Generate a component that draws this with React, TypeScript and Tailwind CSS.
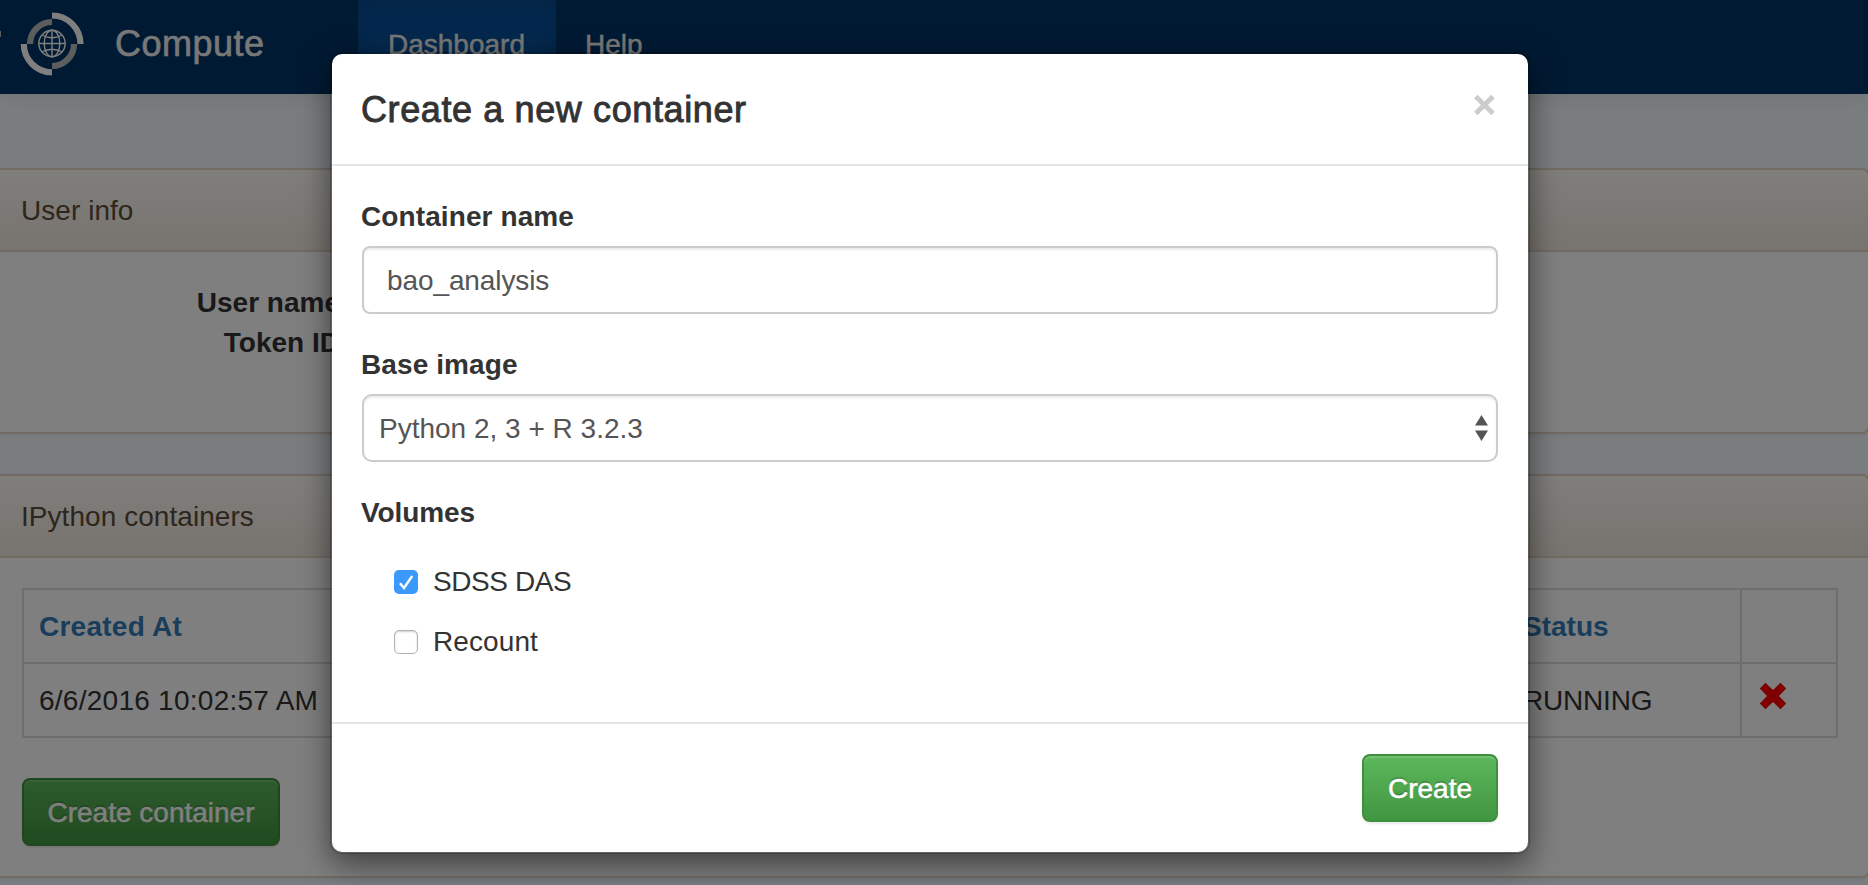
import React from "react";

const font = "font-['Helvetica_Neue','Liberation_Sans',Arial,sans-serif]";

function Logo() {
  return (
    <svg className="block h-[66px] w-[66px]" viewBox="0 0 66 66" fill="none">
      <path d="M32 3.5A28.5 28.5 0 0 1 60.5 32" stroke="#fff" strokeWidth="6.2" />
      <path d="M3.8 32A28.4 28.4 0 0 0 32 60.4" stroke="#fff" strokeWidth="6.2" />
      <path d="M10 32A22 22 0 0 1 32 10" stroke="#bababa" strokeWidth="6.2" />
      <path d="M54 32A22 22 0 0 1 32 54" stroke="#bababa" strokeWidth="6.2" />
      <g stroke="#fff" strokeWidth="1.4">
        <circle cx="32" cy="31.5" r="13.2" />
        <ellipse cx="32" cy="31.5" rx="7.8" ry="13.2" />
        <path d="M32 18v27M18.8 31.5h26.4M22 23Q32 28.5 42 23M22 40Q32 34.5 42 40" />
      </g>
    </svg>
  );
}

function Panel({ title, className, children }: { title: string; className: string; children: React.ReactNode }) {
  return (
    <section className={`-mr-[2px] -ml-[10px] rounded-lg border-2 border-[#e2d6c6] bg-white shadow-[0_2px_4px_rgba(0,0,0,0.05)] ${className}`}>
      <h2 className="flex h-[82px] items-center rounded-t-md border-b-2 border-[#e2d6c6] bg-gradient-to-b from-[#fffdf7] to-[#f0e8e0] pt-px pl-[29px] text-[28px] tracking-[0.05px] text-[#5c4c36]">
        {title}
      </h2>
      {children}
    </section>
  );
}

function Button({ children, className }: { children: React.ReactNode; className: string }) {
  return (
    <button
      className={`block h-[68px] rounded-lg border-2 border-[#3e8f3e] bg-gradient-to-b from-[#5cb85c] to-[#419641] pt-px text-[28px] leading-[40px] text-white shadow-[inset_0_2px_0_rgba(255,255,255,0.15),0_2px_2px_rgba(0,0,0,0.075)] [-webkit-text-stroke:0.5px] [text-shadow:0_-2px_0_rgba(0,0,0,0.2)] ${className}`}
    >
      {children}
    </button>
  );
}

function Page() {
  return (
    <div className="h-full overflow-hidden bg-[#f4fbff]">
      <header className="relative flex h-[94px] bg-[#003466] text-[#f0f0f0] shadow-[0_2px_20px_rgba(0,0,0,0.1)]">
        <span className="mt-[31px] h-[6px] w-px bg-[#bababa]" />
        <div className="flex w-[357px] pt-3 pl-[19px]">
          <Logo />
          <span className="ml-[29px] pt-[6px] text-[36px] leading-[52px] tracking-[0.5px] [-webkit-text-stroke:0.6px]">Compute</span>
        </div>
        <div className="w-[198px] bg-[#08509a] pt-[25px] pl-[30px] text-[28px] leading-[40px] shadow-[inset_0_6px_18px_rgba(0,0,0,0.1)] [-webkit-text-stroke:0.4px]">Dashboard</div>
        <div className="pt-[25px] pl-[29px] text-[28px] leading-[40px] [-webkit-text-stroke:0.4px]">Help</div>
      </header>
      <Panel title="User info" className="mt-[74px] h-[266px]">
        <dl className="w-[348px] pt-[31px] text-right text-[28px] leading-[40px] font-bold">
          <dt>User name</dt>
          <dt>Token ID</dt>
        </dl>
      </Panel>
      <Panel title="IPython containers" className="mt-[40px] h-[404px]">
        <div className="px-[30px] pt-[30px]">
          <table className="w-[1816px] table-fixed border-collapse border-2 border-[#ddd] text-[28px] leading-[40px]">
            <tbody>
              <tr className="h-[74px]">
                <th className="w-[1487px] border-2 border-[#ddd] pt-px pl-[15px] text-left tracking-[0.25px] text-[#337ab7]">Created At</th>
                <th className="border-y-2 border-[#ddd] pt-px pl-[12px] text-left text-[#337ab7]">Status</th>
                <th className="w-[96px] border-2 border-[#ddd]" />
              </tr>
              <tr className="h-[74px]">
                <td className="border-2 border-[#ddd] pt-px pl-[15px] tracking-[0.26px]">6/6/2016 10:02:57 AM</td>
                <td className="border-y-2 border-[#ddd] pt-px pl-[12px] tracking-[-0.2px]">RUNNING</td>
                <td className="border-2 border-[#ddd] pl-[17px]">
                  <svg className="mb-2 block h-[28px] w-[28px]" viewBox="0 0 28 28" fill="#f00">
                    <path d="M6.5 0.8L14 8L21.5 0.8L27.2 6.5L20 14L27.2 21.5L21.5 27.2L14 20L6.5 27.2L0.8 21.5L8 14L0.8 6.5Z" />
                  </svg>
                </td>
              </tr>
            </tbody>
          </table>
          <Button className="mt-10 w-[258px]">Create container</Button>
        </div>
      </Panel>
    </div>
  );
}

function Modal() {
  return (
    <div className="w-[1200px] rounded-[12px] border-2 border-black/20 bg-white bg-clip-padding shadow-[0_10px_30px_rgba(0,0,0,0.5)]">
      <div className="flex h-[112px] justify-between border-b-2 border-[#e5e5e5] pt-[30px] pr-[33px] pl-[29px]">
        <h4 className="text-[36px] leading-[51px] tracking-[0.61px] [-webkit-text-stroke:0.9px]">Create a new container</h4>
        <svg className="mt-[11px] block h-5 w-[21px]" viewBox="0 0 21 20" stroke="#ccc" strokeWidth="5">
          <path d="M1.8 1.5L19 18.5M19 1.5L1.8 18.5" />
        </svg>
      </div>
      <div className="h-[556px] px-[30px] pt-[31px] text-[28px] leading-[40px]">
        <label className="-ml-px block font-bold tracking-[0.1px]">Container name</label>
        <div className="mt-[9px] h-[68px] rounded-lg border-2 border-[#ccc] pt-[13px] pl-[23px] tracking-[-0.1px] text-[#555] shadow-[inset_0_2px_2px_rgba(0,0,0,0.075)]">bao_analysis</div>
        <label className="mt-[31px] -ml-px block font-bold tracking-[0.1px]">Base image</label>
        <div className="mt-[9px] flex h-[68px] justify-between rounded-[10px] border-2 border-[#ccc] pt-[13px] pr-[8px] pl-[15px] text-[#555] shadow-[inset_0_2px_2px_rgba(0,0,0,0.075)]">
          <span>Python 2, 3 + R 3.2.3</span>
          <svg className="mt-[6px] block h-[26px] w-[13px]" viewBox="0 0 13 26" fill="#555">
            <path d="M6.5 0L13 10.5H0ZM6.5 26L13 15.5H0Z" />
          </svg>
        </div>
        <div className="mt-[31px] -ml-px font-bold tracking-[-0.1px]">Volumes</div>
        <div className="mt-[29px] ml-[32px] flex h-[40px] items-center gap-[15px]">
          <span className="flex size-6 rounded-[5px] bg-[#3b99fc]">
            <svg className="size-6" viewBox="0 0 24 24" fill="none" stroke="#fff" strokeWidth="2.4">
              <path d="M6 13.2L10 18L18.2 6" />
            </svg>
          </span>
          <span className="tracking-[-0.4px]">SDSS DAS</span>
        </div>
        <div className="mt-5 ml-[32px] flex h-[40px] items-center gap-[15px]">
          <span className="size-6 rounded-[5px] border border-[#b4b4b4] shadow-[inset_0_1px_2px_rgba(0,0,0,0.2)]" />
          <span className="tracking-[0.1px]">Recount</span>
        </div>
      </div>
      <div className="flex h-[130px] justify-end border-t-2 border-[#e5e5e5] pt-[30px] pr-[30px]">
        <Button className="w-[136px]">Create</Button>
      </div>
    </div>
  );
}

export default function App() {
  return (
    <div className={`relative h-[885px] w-full overflow-hidden text-[#333] ${font}`}>
      <Page />
      <div className="absolute inset-0 flex items-start justify-center bg-black/50 pr-[8px] pt-[52px]">
        <Modal />
      </div>
    </div>
  );
}
